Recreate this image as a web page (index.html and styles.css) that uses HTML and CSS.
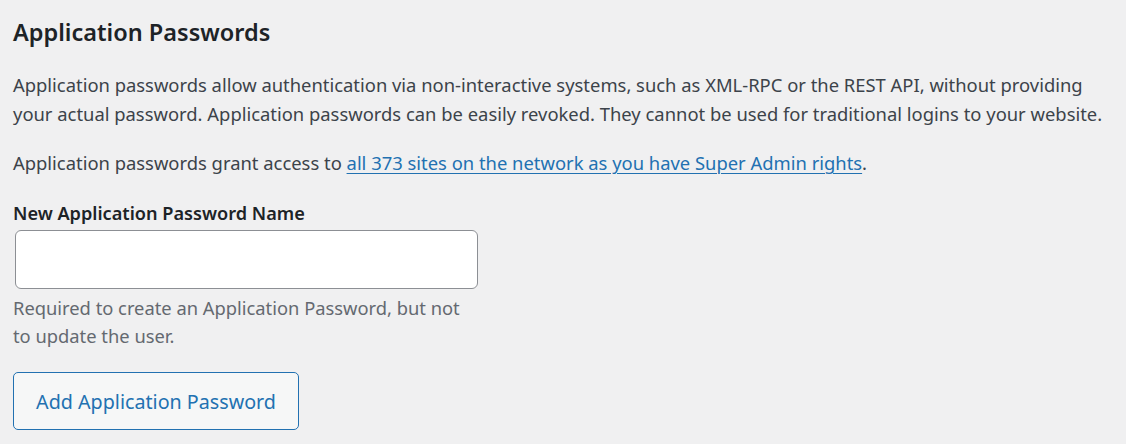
FILE: index.html
```html
<!DOCTYPE html>
<html lang="en">
<head>
<meta charset="utf-8">
<title>Application Passwords</title>
<link rel="stylesheet" href="styles.css">
</head>
<body>
<main class="section">
  <h2 class="title">Application Passwords</h2>
  <p class="text">Application passwords allow authentication via non-interactive systems, such as XML-RPC or the REST API, without providing your actual password. Application passwords can be easily revoked. They cannot be used for traditional logins to your website.</p>
  <p class="text text-access">Application passwords grant access to <a href="#" class="link">all 373 sites on the network as you have Super Admin rights</a>.</p>
  <div class="field">
    <label class="label" for="app-name">New Application Password Name</label>
    <input class="input" id="app-name" type="text">
    <p class="desc">Required to create an Application Password, but not to update the user.</p>
  </div>
  <button class="button" type="button">Add Application Password</button>
</main>
</body>
</html>
```
FILE: styles.css
```css
html, body {
  margin: 0;
  padding: 0;
  background: #f0f0f1;
}
body {
  font-family: "Noto Sans", "Open Sans", sans-serif;
  color: #3c434a;
}
.section {
  padding: 17px 0 0 13px;
  display: flex;
  flex-direction: column;
  align-items: flex-start;
}
.title {
  margin: 0;
  font-size: 23.5px;
  line-height: 30px;
  font-weight: 600;
  color: #1d2327;
}
.text {
  margin: 23.4px 0 0;
  font-size: 18.4px;
  line-height: 29px;
  width: 1100px;
}
.text-access {
  margin-top: 20px;
}
.link {
  color: #2271b1;
  text-decoration: underline;
  text-underline-offset: 3px;
  text-decoration-thickness: 1px;
}
.field {
  display: flex;
  flex-direction: column;
  align-items: flex-start;
  margin-top: 22px;
}
.label {
  font-size: 18.15px;
  line-height: 29px;
  font-weight: 600;
  color: #1d2327;
}
.input {
  box-sizing: border-box;
  margin: 1.5px 0 0 2px;
  width: 463px;
  height: 59px;
  border: 1px solid #8c8f94;
  border-radius: 6px;
  background: #fff;
  padding: 0 12px;
  font-family: inherit;
  font-size: 18px;
}
.desc {
  margin: 5px 0 0;
  width: 463px;
  font-size: 18.34px;
  line-height: 28px;
  color: #646970;
}
.button {
  box-sizing: border-box;
  margin-top: 22px;
  width: 286px;
  height: 58px;
  border: 1px solid #2271b1;
  border-radius: 5px;
  background: #f6f7f7;
  color: #2271b1;
  font-family: inherit;
  font-size: 19.7px;
  line-height: 28px;
  padding: 2px 0 0;
  cursor: pointer;
}
```
